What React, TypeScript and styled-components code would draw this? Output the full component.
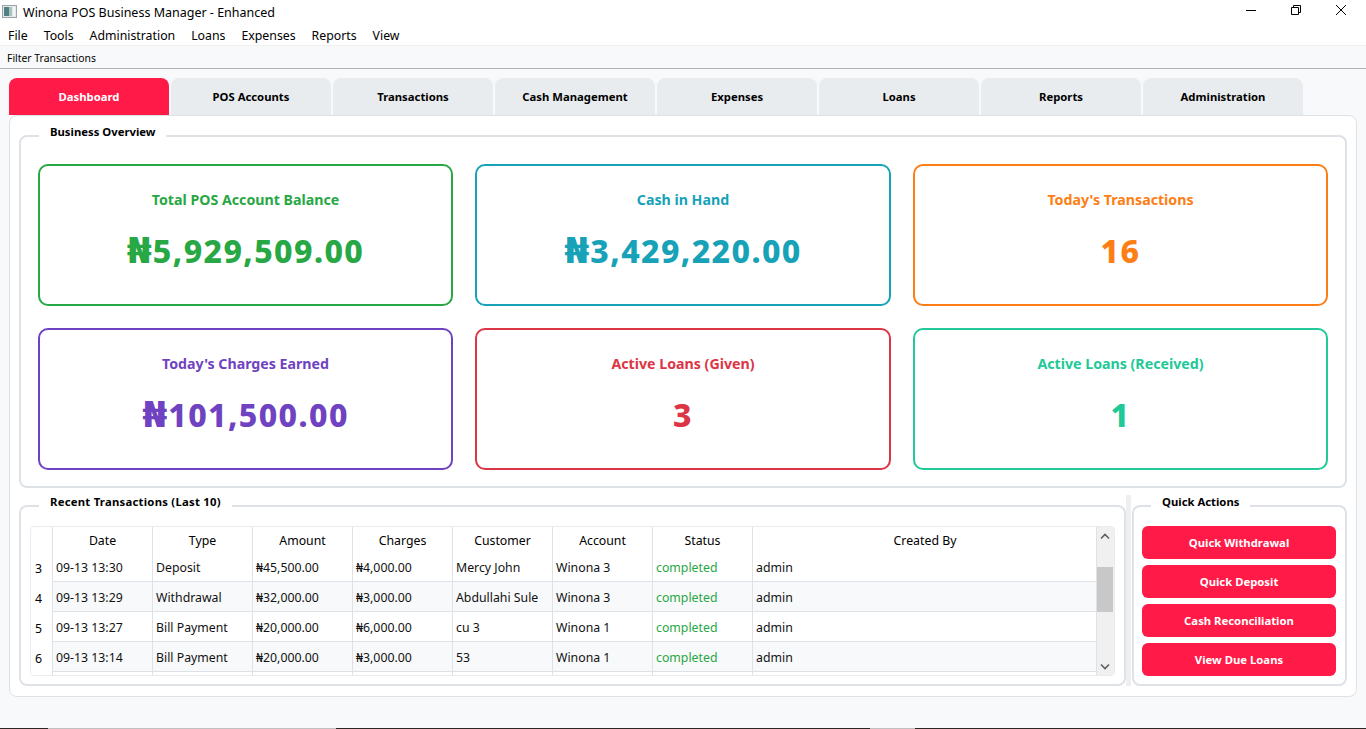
import React from "react";
import styled, { createGlobalStyle } from "styled-components";

const GlobalStyle = createGlobalStyle`
  html, body {
    margin: 0;
    padding: 0;
    background: #f8f9fa;
  }
  body {
    font-family: "Noto Sans", "Open Sans", sans-serif;
    color: #000;
    overflow: hidden;
  }
  * {
    box-sizing: border-box;
  }
`;

const Page = styled.div`
  width: 1366px;
  height: 729px;
  display: flex;
  flex-direction: column;
  background: #f8f9fa;
`;
const TitleBar = styled.div`
  height: 22px;
  background: #fff;
  display: flex;
  align-items: center;
  padding-left: 2px;
`;
const AppTitle = styled.span`
  font-size: 12.5px;
  margin: 2px 0 0 6px;
  flex: 1;
`;
const WindowButtons = styled.div`
  display: flex;
  align-self: flex-start;
  padding-right: 3px;
`;
const WindowButton = styled.div`
  width: 45px;
  height: 20px;
  display: flex;
  align-items: center;
  justify-content: center;
`;
const MenuBar = styled.div`
  height: 24px;
  background: #fff;
  display: flex;
  align-items: center;
  gap: 16px;
  padding: 3px 0 0 8px;
  border-bottom: 1px solid #f0f0f0;
`;
const MenuItem = styled.span`
  font-size: 12.3px;
`;
const ToolBar = styled.div`
  height: 23px;
  display: flex;
  align-items: center;
  padding: 2px 0 0 7px;
  font-size: 10.4px;
  border-bottom: 1px solid #b4b4b4;
`;
const Main = styled.div`
  padding: 9px 9px 0;
`;
const TabRow = styled.div`
  display: flex;
  gap: 2px;
  height: 37px;
`;
const Tab = styled.div<{ $active?: boolean }>`
  width: 160px;
  display: flex;
  align-items: center;
  justify-content: center;
  font-size: 11.3px;
  font-weight: 700;
  border-radius: 8px 8px 0 0;
  background: ${(p) => (p.$active ? "#ff1a47" : "#e9ecef")};
  color: ${(p) => (p.$active ? "#fff" : "#000")};
`;
const Panel = styled.div`
  width: 1348px;
  height: 582px;
  background: #fff;
  border: 1px solid #dee2e6;
  border-radius: 8px;
  padding: 19px 9px 10px;
  display: flex;
  flex-direction: column;
  gap: 17px;
`;
const Group = styled.section`
  position: relative;
  border: 2px solid #dee2e6;
  border-radius: 8px;
  background: #fff;
`;
const GroupTitle = styled.h3<{ $left?: number; $spacing?: number }>`
  position: absolute;
  top: -13px;
  left: ${(p) => p.$left ?? 18}px;
  margin: 0;
  padding: 0 11px;
  height: 16px;
  line-height: 16px;
  background: #fff;
  font-size: 11.3px;
  font-weight: 700;
  letter-spacing: ${(p) => p.$spacing ?? 0}px;
`;
const OverviewGroup = styled(Group)`
  height: 353px;
  padding: 27px 18px 18px 17px;
`;
const CardGrid = styled.div`
  display: grid;
  grid-template-columns: 415px 416px 415px;
  grid-auto-rows: 142px;
  column-gap: 22px;
  row-gap: 22px;
`;
const Card = styled.div<{ $color: string }>`
  border: 2px solid ${(p) => p.$color};
  border-radius: 10px;
  color: ${(p) => p.$color};
  display: flex;
  flex-direction: column;
  align-items: center;
  padding-top: 24px;
`;
const CardLabel = styled.div`
  font-size: 14.2px;
  font-weight: 700;
  line-height: 20px;
`;
const CardValue = styled.div`
  font-size: 32px;
  font-weight: 800;
  line-height: 40px;
  letter-spacing: 1.4px;
  margin-top: 21px;
  white-space: nowrap;
`;
const Naira = styled.span`
  font-family: "DejaVu Sans", sans-serif;
  font-size: 36px;
  font-weight: 700;
  line-height: 1;
  letter-spacing: 1px;
`;
const BottomRow = styled.div`
  display: flex;
  height: 181px;
`;
const RecentGroup = styled(Group)`
  width: 1107px;
  padding: 19px 9px 9px 9px;
`;
const Splitter = styled.div`
  width: 5px;
  margin: -10px 1px 0 0;
  background: #efefef;
`;
const QuickGroup = styled(Group)`
  flex: 1;
  padding: 19px 9px 8px 8px;
  display: flex;
  flex-direction: column;
  gap: 6px;
`;
const ActionButton = styled.button`
  height: 33px;
  border: none;
  border-radius: 6px;
  background: #ff1a47;
  color: #fff;
  font-family: inherit;
  font-size: 11.3px;
  font-weight: 700;
`;
const TableFrame = styled.div`
  height: 150px;
  display: flex;
  border: 1px solid #e9ecef;
  border-radius: 4px;
  overflow: hidden;
  background: #fff;
`;
const TableArea = styled.div`
  flex: 1;
  overflow: hidden;
`;
const GridTable = styled.table`
  border-collapse: separate;
  border-spacing: 0;
  table-layout: fixed;
  width: 1066px;
  font-size: 12.3px;
`;
const HeadCell = styled.th<{ $w: number }>`
  width: ${(p) => p.$w}px;
  height: 27px;
  padding: 0;
  font-weight: 400;
  text-align: center;
  border-right: 1px solid #dee2e6;
  &:last-child {
    border-right: none;
  }
`;
const RowHead = styled.td<{ $first?: boolean }>`
  padding: ${(p) => (p.$first ? "0" : "2px")} 0 0 4px;
  border-right: 1px solid #dee2e6;
  background: #fff;
`;
const Cell = styled.td<{ $alt?: boolean; $ok?: boolean; $first?: boolean }>`
  height: ${(p) => (p.$first ? 28 : 30)}px;
  padding: ${(p) => (p.$first ? "0 3px 1px" : "1px 3px 0")};
  white-space: nowrap;
  overflow: hidden;
  background: ${(p) => (p.$alt ? "#f8f9fa" : "#fff")};
  color: ${(p) => (p.$ok ? "#28a745" : "#111")};
  border-right: 1px solid #dee2e6;
  border-bottom: 1px solid #dee2e6;
  &:last-child {
    border-right: none;
  }
`;
const ScrollBar = styled.div`
  width: 18px;
  padding-right: 1px;
  background: #f0f0f0;
  border-left: 1px solid #dee2e6;
  display: flex;
  flex-direction: column;
  align-items: center;
`;
const ScrollArrow = styled.div`
  height: 18px;
  width: 100%;
  display: flex;
  align-items: center;
  justify-content: center;
`;
const ScrollTrack = styled.div`
  flex: 1;
  width: 100%;
  padding-top: 22px;
`;
const ScrollThumb = styled.div`
  height: 45px;
  background: #c8c8c8;
`;
const BottomEdge = styled.div`
  margin-top: auto;
  height: 1px;
  display: flex;
`;
const EdgePiece = styled.div<{ $w: number; $dark?: boolean }>`
  width: ${(p) => p.$w}px;
  background: ${(p) => (p.$dark ? "#2b2523" : "#c0c0c0")};
`;

const tabs = [
  "Dashboard",
  "POS Accounts",
  "Transactions",
  "Cash Management",
  "Expenses",
  "Loans",
  "Reports",
  "Administration",
];
const menus = ["File", "Tools", "Administration", "Loans", "Expenses", "Reports", "View"];
const cards = [
  { label: "Total POS Account Balance", value: "5,929,509.00", money: true, color: "#28a745" },
  { label: "Cash in Hand", value: "3,429,220.00", money: true, color: "#17a2b8" },
  { label: "Today's Transactions", value: "16", color: "#fd7e14" },
  { label: "Today's Charges Earned", value: "101,500.00", money: true, color: "#6f42c1" },
  { label: "Active Loans (Given)", value: "3", color: "#dc3545" },
  { label: "Active Loans (Received)", value: "1", color: "#20c997" },
];
const columns = [
  { name: "Date", w: 100 },
  { name: "Type", w: 100 },
  { name: "Amount", w: 100 },
  { name: "Charges", w: 100 },
  { name: "Customer", w: 100 },
  { name: "Account", w: 100 },
  { name: "Status", w: 100 },
  { name: "Created By", w: 344 },
];
const rows = [
  ["3", "09-13 13:30", "Deposit", "₦45,500.00", "₦4,000.00", "Mercy John", "Winona 3"],
  ["4", "09-13 13:29", "Withdrawal", "₦32,000.00", "₦3,000.00", "Abdullahi Sule", "Winona 3"],
  ["5", "09-13 13:27", "Bill Payment", "₦20,000.00", "₦6,000.00", "cu 3", "Winona 1"],
  ["6", "09-13 13:14", "Bill Payment", "₦20,000.00", "₦3,000.00", "53", "Winona 1"],
  ["7", "", "", "", "", "", ""],
];
const actions = ["Quick Withdrawal", "Quick Deposit", "Cash Reconciliation", "View Due Loans"];
const edge = [
  { w: 48, dark: true },
  { w: 288, dark: false },
  { w: 534, dark: true },
  { w: 45, dark: false },
  { w: 451, dark: true },
];

const AppIcon = () => (
  <svg width="15" height="13" viewBox="0 0 15 13">
    <rect x="0.5" y="0.5" width="14" height="12" fill="#e4e8e8" stroke="#9aa3a5" />
    <rect x="2" y="2" width="5" height="9" fill="#4d8088" />
    <rect x="7" y="2" width="3" height="9" fill="#a9c4ba" />
    <rect x="11" y="2" width="2" height="9" fill="#f5f5f5" />
  </svg>
);

const App = () => {
  return (
    <Page>
      <GlobalStyle />
      <TitleBar>
        <AppIcon />
        <AppTitle>Winona POS Business Manager - Enhanced</AppTitle>
        <WindowButtons>
          <WindowButton>
            <svg width="12" height="12" viewBox="0 0 12 12">
              <path d="M1 6.5h10" stroke="#000" fill="none" />
            </svg>
          </WindowButton>
          <WindowButton>
            <svg width="12" height="12" viewBox="0 0 12 12">
              <path d="M1.5 3.5h7v7h-7z M3.5 3.5v-2h7v7h-2" stroke="#000" fill="none" />
            </svg>
          </WindowButton>
          <WindowButton>
            <svg width="12" height="12" viewBox="0 0 12 12">
              <path d="M1 1l10 10M11 1L1 11" stroke="#000" fill="none" />
            </svg>
          </WindowButton>
        </WindowButtons>
      </TitleBar>
      <MenuBar>
        {menus.map((m) => (
          <MenuItem key={m}>{m}</MenuItem>
        ))}
      </MenuBar>
      <ToolBar>Filter Transactions</ToolBar>
      <Main>
        <TabRow>
          {tabs.map((t, i) => (
            <Tab key={t} $active={i === 0}>
              {t}
            </Tab>
          ))}
        </TabRow>
        <Panel>
          <OverviewGroup>
            <GroupTitle>Business Overview</GroupTitle>
            <CardGrid>
              {cards.map((c) => (
                <Card key={c.label} $color={c.color}>
                  <CardLabel>{c.label}</CardLabel>
                  <CardValue>
                    {c.money && <Naira>₦</Naira>}
                    {c.value}
                  </CardValue>
                </Card>
              ))}
            </CardGrid>
          </OverviewGroup>
          <BottomRow>
            <RecentGroup>
              <GroupTitle $spacing={0.25}>Recent Transactions (Last 10)</GroupTitle>
              <TableFrame>
                <TableArea>
                  <GridTable>
                    <thead>
                      <tr>
                        <HeadCell $w={22} />
                        {columns.map((c) => (
                          <HeadCell key={c.name} $w={c.w}>
                            {c.name}
                          </HeadCell>
                        ))}
                      </tr>
                    </thead>
                    <tbody>
                      {rows.map((r, i) => {
                        const first = i === 0;
                        const alt = i % 2 === 1;
                        const filled = r[1] !== "";
                        return (
                          <tr key={r[0]}>
                            <RowHead $first={first}>{filled ? r[0] : ""}</RowHead>
                            {r.slice(1).map((v, j) => (
                              <Cell key={j} $alt={alt} $first={first}>
                                {v}
                              </Cell>
                            ))}
                            <Cell $alt={alt} $first={first} $ok>
                              {filled ? "completed" : ""}
                            </Cell>
                            <Cell $alt={alt} $first={first}>
                              {filled ? "admin" : ""}
                            </Cell>
                          </tr>
                        );
                      })}
                    </tbody>
                  </GridTable>
                </TableArea>
                <ScrollBar>
                  <ScrollArrow>
                    <svg width="10" height="7" viewBox="0 0 10 7">
                      <path d="M1 5.5L5 1.5L9 5.5" stroke="#606060" strokeWidth="1.6" fill="none" />
                    </svg>
                  </ScrollArrow>
                  <ScrollTrack>
                    <ScrollThumb />
                  </ScrollTrack>
                  <ScrollArrow>
                    <svg width="10" height="7" viewBox="0 0 10 7">
                      <path d="M1 1.5L5 5.5L9 1.5" stroke="#606060" strokeWidth="1.6" fill="none" />
                    </svg>
                  </ScrollArrow>
                </ScrollBar>
              </TableFrame>
            </RecentGroup>
            <Splitter />
            <QuickGroup>
              <GroupTitle $left={17}>Quick Actions</GroupTitle>
              {actions.map((a) => (
                <ActionButton key={a}>{a}</ActionButton>
              ))}
            </QuickGroup>
          </BottomRow>
        </Panel>
      </Main>
      <BottomEdge>
        {edge.map((e, i) => (
          <EdgePiece key={i} $w={e.w} $dark={e.dark} />
        ))}
      </BottomEdge>
    </Page>
  );
};

export default App;
